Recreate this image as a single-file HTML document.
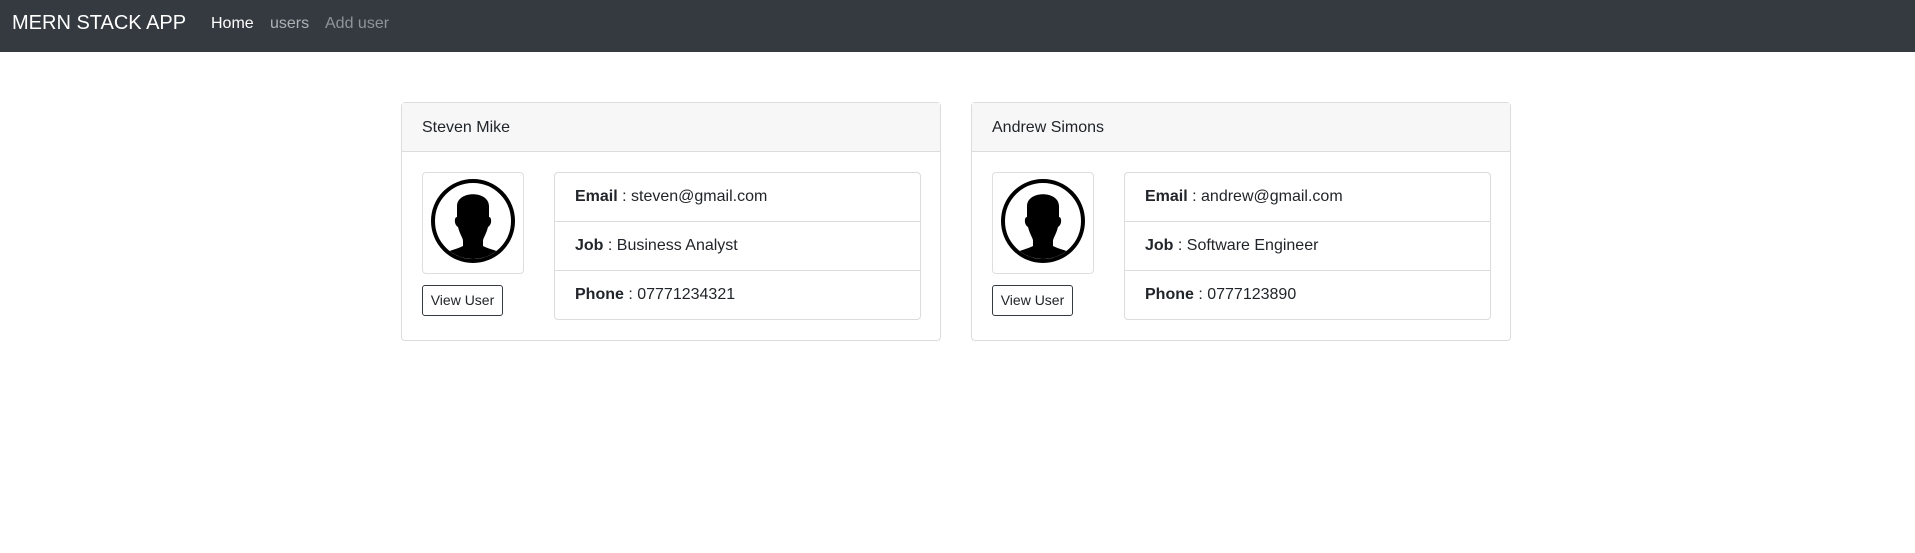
<!DOCTYPE html>
<html><head><style>
*{box-sizing:border-box;margin:0;padding:0}
body{width:1915px;height:553px;background:#fff;font-family:"Liberation Sans",Arial,sans-serif;color:#212529;position:relative;overflow:hidden}
.nav{position:absolute;left:0;top:0;width:1915px;height:52px;background:#343a40}
.nav span{position:absolute;top:0;line-height:47px;white-space:nowrap}
.brand{left:12px;font-size:20px;color:#fff}
.l{font-size:16px}
.card{position:absolute;top:102px;width:540px;height:239px;border:1px solid #dcdcdc;border-radius:4px}
.hd{height:49px;background:#f7f7f7;border-bottom:1px solid #dcdcdc;padding-left:20px;line-height:49px;font-size:16px}
.av{position:absolute;left:20px;top:69px;width:102px;height:102px;border:1px solid #dedede;border-radius:4px}
.btn{position:absolute;left:20px;top:182px;width:81px;height:31px;border:1px solid #343a40;border-radius:3px;font-size:14px;line-height:29px;text-align:center}
.lg{position:absolute;left:152px;top:69px;width:367px;height:148px;border:1px solid #dcdcdc;border-radius:4px}
.it{height:49px;line-height:47px;padding-left:20px;font-size:16px;border-bottom:1px solid #dcdcdc}
.it:last-child{border-bottom:none}
</style></head><body>
<div class="nav">
<span class="brand">MERN STACK APP</span>
<span class="l" style="left:211px;color:#fff">Home</span>
<span class="l" style="left:270px;color:rgba(255,255,255,.6)">users</span>
<span class="l" style="left:325px;color:rgba(255,255,255,.45)">Add user</span>
</div>

<div class="card" style="left:401px">
<div class="hd">Steven Mike</div>
<div class="av"><svg width="100" height="100" viewBox="0 0 100 100"><defs><clipPath id="c1"><circle cx="50" cy="48" r="38"/></clipPath></defs><circle cx="50" cy="48" r="40" fill="#fff" stroke="#000" stroke-width="4"/><g clip-path="url(#c1)"><path d="M34 34 C33 17 67 17 66 34 L66 44 C69 44 69 52 65 54 C63 62 60 65 60 68 L60 73 C68 77 80 79 86 84 L86 100 L14 100 L14 84 C20 79 32 77 40 73 L40 68 C40 65 37 62 35 54 C31 52 31 44 34 44 Z" fill="#000"/></g></svg></div>
<div class="btn">View User</div>
<div class="lg">
<div class="it"><b>Email</b> : steven@gmail.com</div>
<div class="it"><b>Job</b> : Business Analyst</div>
<div class="it"><b>Phone</b> : 07771234321</div>
</div>
</div>

<div class="card" style="left:971px">
<div class="hd">Andrew Simons</div>
<div class="av"><svg width="100" height="100" viewBox="0 0 100 100"><defs><clipPath id="c2"><circle cx="50" cy="48" r="38"/></clipPath></defs><circle cx="50" cy="48" r="40" fill="#fff" stroke="#000" stroke-width="4"/><g clip-path="url(#c2)"><path d="M34 34 C33 17 67 17 66 34 L66 44 C69 44 69 52 65 54 C63 62 60 65 60 68 L60 73 C68 77 80 79 86 84 L86 100 L14 100 L14 84 C20 79 32 77 40 73 L40 68 C40 65 37 62 35 54 C31 52 31 44 34 44 Z" fill="#000"/></g></svg></div>
<div class="btn">View User</div>
<div class="lg">
<div class="it"><b>Email</b> : andrew@gmail.com</div>
<div class="it"><b>Job</b> : Software Engineer</div>
<div class="it"><b>Phone</b> : 0777123890</div>
</div>
</div>
</body></html>
